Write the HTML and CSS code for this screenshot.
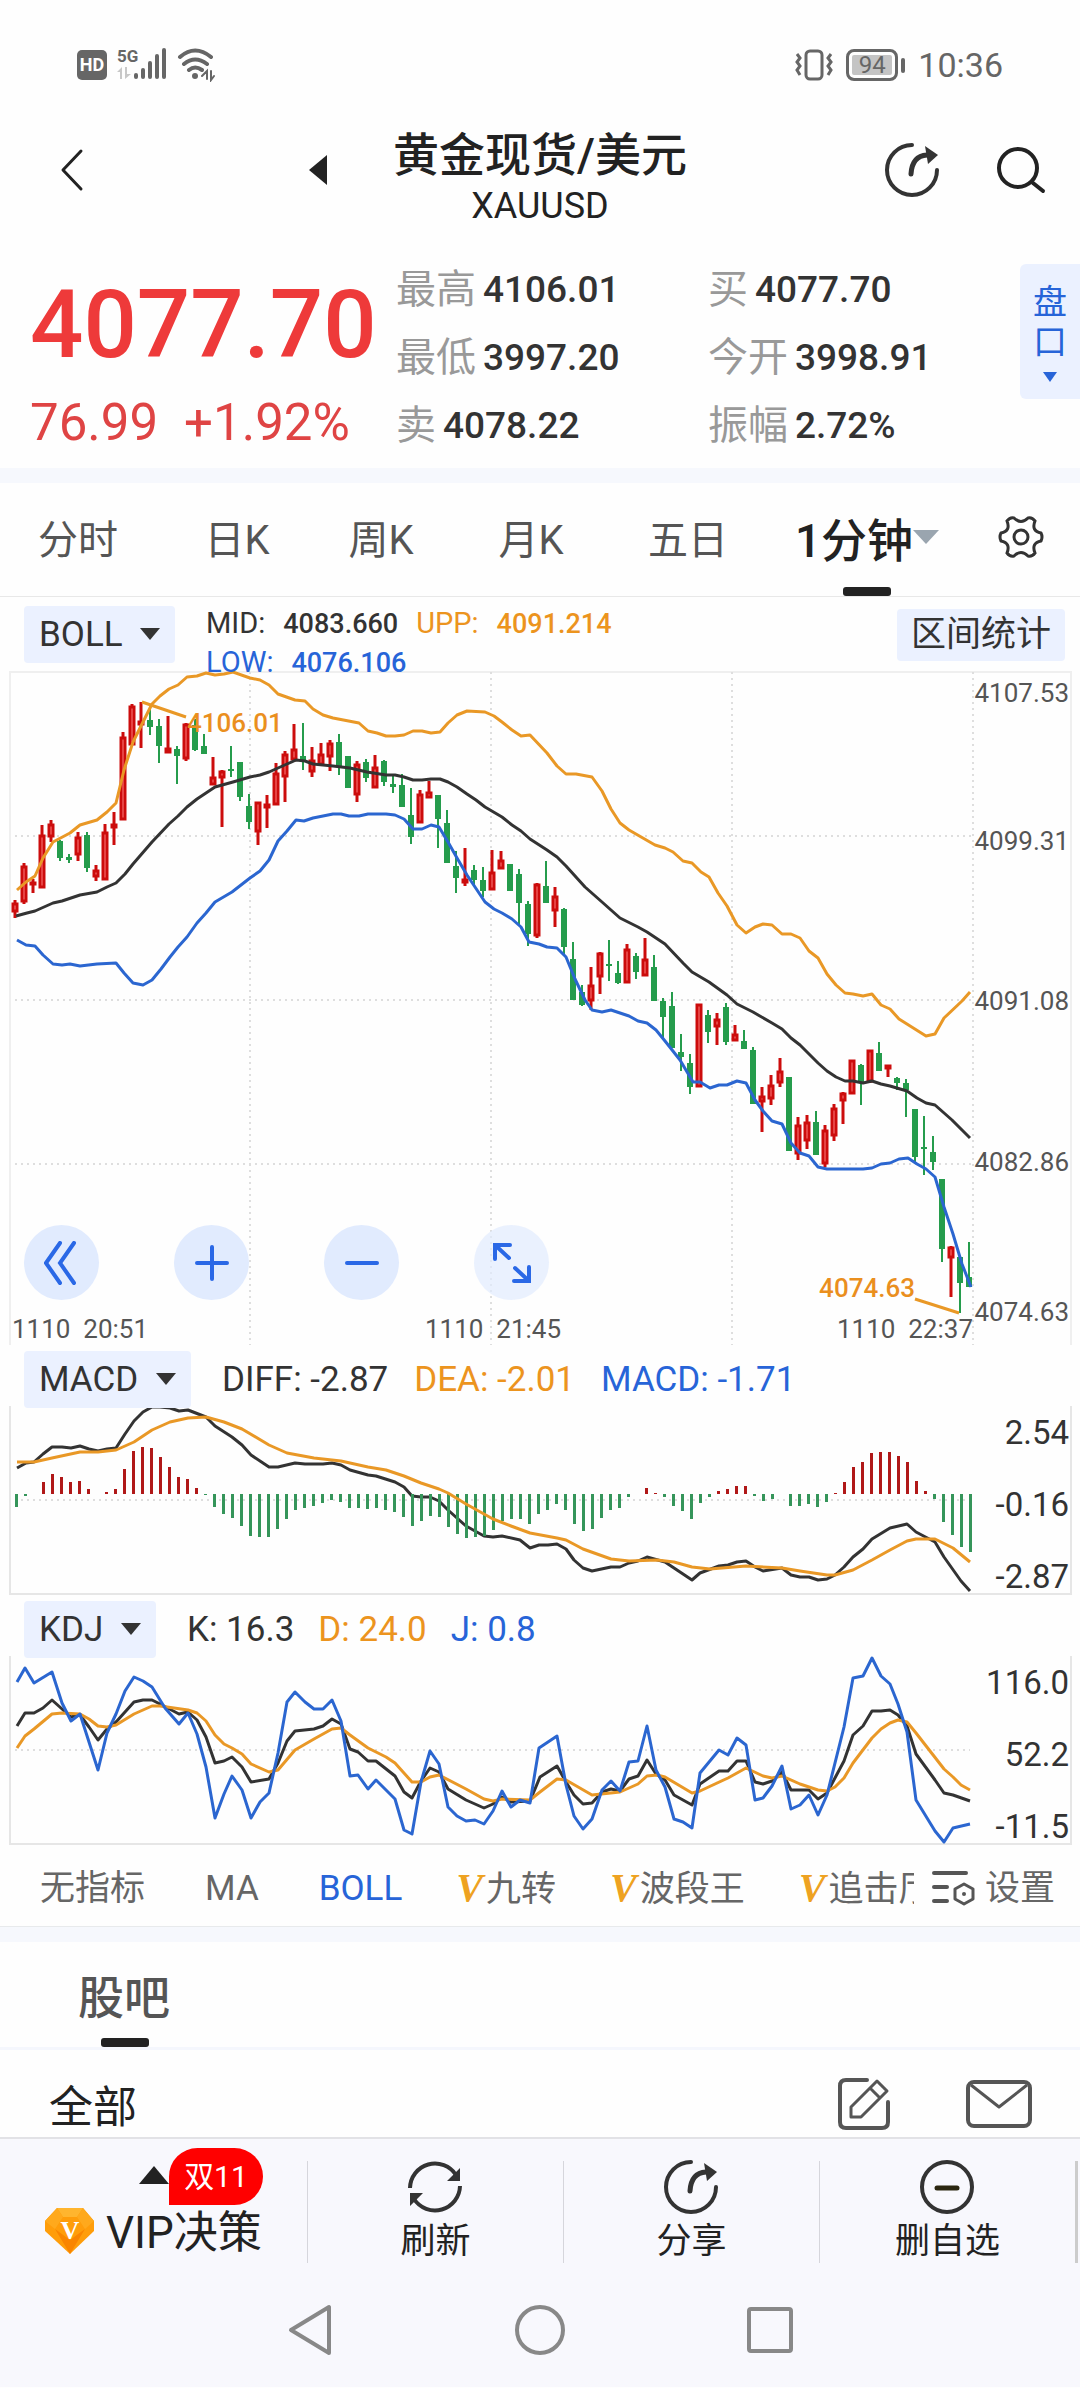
FILE: index.html
```html
<!DOCTYPE html>
<html lang="zh-CN">
<head>
  <meta charset="UTF-8" />
  <meta name="viewport" content="width=device-width, initial-scale=1.0"/>
  <title>黄金现货/美元 XAUUSD</title>
  <link rel="stylesheet" href="styles.css">
</head>

<body>
  <div class="status-bar">
    <div class="status-left">
      <span class="hd">HD</span>
      <svg width="50" height="36" viewBox="0 0 50 36" fill="#666">
        <text x="0" y="15" font-size="17" font-weight="700" class="net">5G</text>
        <g fill="#c8c8c8"><path d="M0 25l5-5v12H3v-7zM8 20h2v7h4l-6 5z"/></g>
        <rect x="17" y="26" width="4" height="6" rx="2"/>
        <rect x="24" y="21" width="4" height="11" rx="2"/>
        <rect x="31" y="14" width="4" height="18" rx="2"/>
        <rect x="38" y="7" width="4" height="25" rx="2"/>
        <rect x="45" y="1" width="4" height="31" rx="2"/>
      </svg>
      <svg width="40" height="34" viewBox="0 0 40 34" fill="none" stroke="#666" stroke-width="4" stroke-linecap="round">
        <path d="M3 9q15-13 31 0M7 16q11-9 23 0M12 22q6-5 13 0"/>
        <circle cx="18" cy="28" r="3" fill="#666" stroke="none"/>
        <path d="M25 28l5-5v8M34 23v9l3-4" stroke-width="2"/>
      </svg>
    </div>
    <div class="status-right">
      <svg width="40" height="32" viewBox="0 0 40 32" fill="none" stroke="#666" stroke-width="3">
        <rect x="12" y="2" width="16" height="28" rx="4"/>
        <path d="M3 5l3 4-3 4 3 4-3 4 3 5M37 5l-3 4 3 4-3 4 3 4-3 5"/>
      </svg>
      <span class="battery">94</span>
      <span class="clock">10:36</span>
    </div>
  </div>

  <header class="top">
    <div class="top-side">
      <button class="icon-btn" aria-label="返回">
        <svg width="24" height="44" viewBox="0 0 24 44" fill="none" stroke="#222" stroke-width="3" stroke-linecap="round" stroke-linejoin="round"><path d="M21 3L3 22l18 19"/></svg>
      </button>
      <button class="icon-btn prev" aria-label="上一个">
        <svg width="18" height="30" viewBox="0 0 18 30" fill="#222"><path d="M18 0v30L0 15z"/></svg>
      </button>
    </div>
    <div class="title">
      <h1>黄金现货/美元</h1>
      <p>XAUUSD</p>
    </div>
    <div class="top-side right">
      <button class="icon-btn" aria-label="分享">
        <svg width="56" height="56" viewBox="0 0 56 56"><use href="#i-share"/></svg>
      </button>
      <button class="icon-btn" aria-label="搜索">
        <svg width="50" height="48" viewBox="0 0 50 48" fill="none" stroke="#222" stroke-width="4" stroke-linecap="round"><circle cx="22" cy="22" r="19"/><path d="M37 37l10 8"/></svg>
      </button>
    </div>
  </header>

  <section class="quote">
    <div class="price">
      <strong>4077.70</strong>
      <p><span>76.99</span><span>+1.92%</span></p>
    </div>
    <dl class="stats">
      <div><dt>最高</dt><dd>4106.01</dd></div>
      <div><dt>买</dt><dd>4077.70</dd></div>
      <div><dt>最低</dt><dd>3997.20</dd></div>
      <div><dt>今开</dt><dd>3998.91</dd></div>
      <div><dt>卖</dt><dd>4078.22</dd></div>
      <div><dt>振幅</dt><dd>2.72%</dd></div>
    </dl>
    <button class="depth">盘口<i class="caret"></i></button>
  </section>

  <nav class="periods">
    <button>分时</button>
    <button>日K</button>
    <button>周K</button>
    <button>月K</button>
    <button>五日</button>
    <button class="active">1分钟<i class="caret"></i></button>
    <button aria-label="图表设置">
      <svg width="46" height="46" viewBox="-23 -23 46 46" fill="none" stroke="#333" stroke-width="3">
        <path d="M20-4Q22 0 20 4Q10 6 14 16Q11 20 7 19Q0 12-7 19Q-11 20-14 16Q-10 6-20 4Q-22 0-20-4Q-10-6-14-16Q-11-20-7-19Q0-12 7-19Q11-20 14-16Q10-6 20-4z"/>
        <circle r="7"/>
      </svg>
    </button>
  </nav>

  <main>
    <section class="chart">
      <div class="chart-head main-head">
        <label class="chip"><select aria-label="主图指标"><option>BOLL</option></select></label>
        <div class="boll">
          <span class="mid">MID: <b>4083.660</b></span>
          <span class="orange">UPP: <b>4091.214</b></span>
          <span class="blue">LOW: <b>4076.106</b></span>
        </div>
        <button class="range">区间统计</button>
      </div>
      <div class="plot">
        <svg id="kline" viewBox="0 0 1080 675"></svg>
        <div class="tools">
          <button aria-label="后退"><svg width="36" height="44" viewBox="0 0 36 44"><path d="M16 2L2 22l14 20M30 2L16 22l14 20"/></svg></button>
          <button aria-label="放大"><svg width="34" height="44" viewBox="0 0 34 44"><path d="M17 6v32M2 22h30"/></svg></button>
          <button aria-label="缩小"><svg width="34" height="44" viewBox="0 0 34 44"><path d="M2 22h30"/></svg></button>
          <button class="light" aria-label="全屏"><svg width="40" height="44" viewBox="0 0 40 44"><path d="M3 18V4h15M3 4l14 13M37 26v14H22M37 40L23 27"/></svg></button>
        </div>
      </div>
    </section>

    <section class="chart">
      <div class="chart-head">
        <label class="chip"><select aria-label="副图指标一"><option>MACD</option></select></label>
        <p class="values macd"><span>DIFF: -2.87</span><span class="orange">DEA: -2.01</span><span class="blue">MACD: -1.71</span></p>
      </div>
      <svg id="macd" class="sub" viewBox="0 0 1080 190"></svg>
    </section>

    <section class="chart">
      <div class="chart-head">
        <label class="chip"><select aria-label="副图指标二"><option>KDJ</option></select></label>
        <p class="values"><span>K: 16.3</span><span class="orange">D: 24.0</span><span class="blue">J: 0.8</span></p>
      </div>
      <svg id="kdj" class="sub" viewBox="0 0 1080 190"></svg>
    </section>

    <div class="indicators">
      <div class="indicator-list">
        <button>无指标</button>
        <button>MA</button>
        <button class="blue">BOLL</button>
        <button class="vip"><i>V</i>九转</button>
        <button class="vip"><i>V</i>波段王</button>
        <button class="vip"><i>V</i>追击厅</button>
      </div>
      <button class="setting">
        <svg width="44" height="38" viewBox="0 0 44 38" fill="none" stroke="#555" stroke-width="4" stroke-linecap="round">
          <path d="M2 3h32M2 17h13M2 31h13"/>
          <path d="M32 14l9 5v10l-9 5-9-5V19z" stroke-width="3" stroke-linejoin="round"/>
          <circle cx="32" cy="24" r="2" fill="#555" stroke="none"/>
        </svg>
        设置
      </button>
    </div>

    <section class="forum">
      <h2>股吧</h2>
      <div class="filter">
        <button class="all">全部</button>
        <div class="filter-icons">
          <button class="icon-btn" aria-label="发帖">
            <svg width="54" height="54" viewBox="0 0 54 54" fill="none" stroke="#555" stroke-width="4" stroke-linecap="round" stroke-linejoin="round">
              <path d="M30 3H9q-6 0-6 6v36q0 6 6 6h36q6 0 6-6V25"/>
              <path d="M14 40V30L40 4l10 10-26 26zM33 11l10 10" stroke-width="3"/>
            </svg>
          </button>
          <button class="icon-btn" aria-label="消息">
            <svg width="66" height="48" viewBox="0 0 66 48" fill="none" stroke="#555" stroke-width="4" stroke-linejoin="round">
              <rect x="2" y="2" width="62" height="44" rx="6"/>
              <path d="M5 5l28 22L61 5" stroke-width="3"/>
            </svg>
          </button>
        </div>
      </div>
    </section>
  </main>

  <footer>
    <div class="actions">
      <button class="vip-entry">
        <svg width="50" height="48" viewBox="0 0 50 48">
          <path d="M12 1h26l11 13v10L25 47 0 24V14z" fill="#ff9d0a"/>
          <path d="M12 1h26l-6 9H18z" fill="#ffb52e"/>
          <path d="M12 1l6 9-8 12L0 14zM38 1l-6 9 8 12 9-8z" fill="#ffa91c"/>
          <path d="M25 33L10 22 25 47l15-25z" fill="#f98500"/>
          <text x="25" y="32" text-anchor="middle" class="gem">V</text>
        </svg>
        <span>VIP决策</span>
        <i class="up"></i>
        <em>双11</em>
      </button>
      <button class="action">
        <svg width="56" height="56" viewBox="0 0 56 56" fill="none" stroke="#333" stroke-width="4">
          <path d="M3 29A25 25 0 0 1 49 16M53 27A25 25 0 0 1 7 40"/>
          <path d="M53 9v13H40zM3 47V34h13z" fill="#333" stroke="none"/>
        </svg>
        刷新
      </button>
      <button class="action">
        <svg width="56" height="56" viewBox="0 0 56 56"><use href="#i-share"/></svg>
        分享
      </button>
      <button class="action">
        <svg width="56" height="56" viewBox="0 0 56 56" fill="none" stroke="#333" stroke-width="4">
          <circle cx="28" cy="28" r="25"/><path d="M18 29h20" stroke="#2b2710" stroke-width="5" stroke-linecap="round"/>
        </svg>
        删自选
      </button>
    </div>
    <div class="sysnav">
      <button class="icon-btn" aria-label="返回键"><svg width="46" height="54" viewBox="0 0 46 54"><path d="M42 4v46L4 27z"/></svg></button>
      <button class="icon-btn" aria-label="主页键"><svg width="52" height="52" viewBox="0 0 52 52"><circle cx="26" cy="26" r="23"/></svg></button>
      <button class="icon-btn" aria-label="任务键"><svg width="46" height="46" viewBox="0 0 46 46"><rect x="2" y="2" width="42" height="42" rx="2"/></svg></button>
    </div>
  </footer>

  <svg class="defs" aria-hidden="true">
    <symbol id="i-share" viewBox="0 0 56 56">
      <path d="M28 3A25 25 0 1 0 53 28" fill="none" stroke="#333" stroke-width="4" stroke-linecap="round"/>
      <path d="M27 32Q28 14 43 13" fill="none" stroke="#333" stroke-width="5" stroke-linecap="round"/>
      <path d="M41 4l13 9-10 9z" fill="#333"/>
    </symbol>
  </svg>

  <script src="script.js"></script>
</body>
</html>
```
FILE: styles.css
```css
* {
  margin: 0;
  padding: 0;
  box-sizing: border-box;
}

body {
  background: #fefefe;
  color: #333;
  font-family: Roboto, "Noto Sans CJK SC", sans-serif;
  font-size: 35px;
}

button,
select {
  font: inherit;
  color: inherit;
  background: none;
  border: none;
  white-space: nowrap;
}

svg {
  display: block;
  flex-shrink: 0;
}

i,
em {
  font-style: normal;
}

.defs {
  position: absolute;
  width: 0;
  height: 0;
}

.orange {
  color: #ec941e;
}

.blue {
  color: #2764d8;
}

.caret {
  width: 0;
  height: 0;
  border: 7px solid transparent;
  border-top: 10px solid currentColor;
  border-bottom: 0;
}

.icon-btn {
  display: flex;
  align-items: center;
  justify-content: center;
}

/* status bar */
.status-bar {
  height: 130px;
  padding: 0 77px;
  display: flex;
  justify-content: space-between;
  align-items: center;
  color: #666;
}

.status-left,
.status-right {
  display: flex;
  align-items: center;
  gap: 10px;
}

.hd {
  width: 30px;
  height: 30px;
  border-radius: 5px;
  background: #666;
  color: #fff;
  font-size: 18px;
  font-weight: 700;
  line-height: 30px;
  text-align: center;
}

.battery {
  position: relative;
  width: 52px;
  height: 32px;
  margin: 0 10px 0 2px;
  border: 3px solid #666;
  border-radius: 8px;
  background: #c4c4c4;
  box-shadow: inset 0 0 0 3px #fefefe;
  font-size: 24px;
  line-height: 26px;
  text-align: center;
}

.battery::after {
  content: "";
  position: absolute;
  right: -10px;
  top: 6px;
  width: 4px;
  height: 15px;
  border-radius: 2px;
  background: #666;
}

.clock {
  font-size: 34px;
}

/* title */
.top {
  display: grid;
  grid-template-columns: 1fr auto 1fr;
  align-items: start;
  color: #222;
}

.top-side {
  height: 80px;
  padding-left: 60px;
  display: flex;
  align-items: center;
}

.top-side .prev {
  margin-left: auto;
  margin-right: 66px;
}

.top-side.right {
  justify-content: flex-end;
  gap: 56px;
  padding: 0 34px 0 0;
}

.title {
  text-align: center;
  line-height: 51px;
}

.title h1 {
  font-size: 46px;
  font-weight: 500;
}

.title p {
  font-size: 36px;
}

/* quote */
.quote {
  position: relative;
  display: flex;
  padding: 24px 84px 8px 30px;
  border-bottom: 15px solid #f6f8fd;
}

.price {
  width: 366px;
  color: #ee3a3a;
}

.price strong {
  display: block;
  font-size: 94px;
  font-weight: 500;
  line-height: 138px;
}

.price p {
  display: flex;
  gap: 26px;
  font-size: 51px;
  line-height: 58px;
  color: #df4444;
}

.stats {
  flex: 1;
  display: grid;
  grid-template-columns: 312px 1fr;
}

.stats div {
  display: flex;
  gap: 7px;
  line-height: 68px;
}

.stats dt {
  font-size: 40px;
  color: #999;
}

.stats dd {
  font-size: 37px;
  font-weight: 500;
}

.depth {
  position: absolute;
  right: 0;
  top: 32px;
  width: 60px;
  height: 135px;
  display: flex;
  flex-direction: column;
  align-items: center;
  justify-content: center;
  border-radius: 6px 0 0 6px;
  background: #ebf1ff;
  color: #2764d8;
  font-size: 34px;
  line-height: 40px;
  white-space: normal;
  padding: 0 12px;
}

.depth .caret {
  margin-top: 10px;
}

/* periods */
.periods {
  display: grid;
  grid-template-columns: 156fr 162fr 126fr 174fr 140fr 218fr 90fr;
  height: 114px;
  padding-right: 14px;
  border-bottom: 1px solid #e8e8e8;
  font-size: 40px;
  color: #555;
}

.periods button {
  position: relative;
  display: flex;
  align-items: center;
  justify-content: center;
  padding-bottom: 5px;
}

.periods .active {
  color: #222;
  font-size: 46px;
  font-weight: 500;
}

.periods .active::after {
  content: "";
  position: absolute;
  left: calc(50% - 24px);
  bottom: 0;
  width: 48px;
  height: 9px;
  border-radius: 3px;
  background: #222;
}

.periods .caret {
  border-width: 13px;
  border-top-width: 14px;
  border-bottom-width: 0;
  color: #9aa5af;
}

/* charts */
.chart {
  padding-bottom: 5px;
}

.chart-head {
  position: relative;
  z-index: 1;
  display: flex;
  align-items: flex-start;
  height: 57px;
  padding: 0 15px 0 24px;
}

.main-head {
  height: 74px;
  padding-top: 9px;
}

.chip {
  position: relative;
  height: 57px;
  border-radius: 4px;
  background: #ebf1ff;
}

.chip select {
  height: 57px;
  padding: 0 52px 0 15px;
  font-size: 35px;
  appearance: none;
}

.chip::after {
  content: "";
  position: absolute;
  right: 15px;
  top: 22px;
  border: 10px solid transparent;
  border-top: 12px solid #333;
  border-bottom: 0;
  pointer-events: none;
}

.boll {
  display: flex;
  flex-wrap: wrap;
  max-width: 480px;
  column-gap: 18px;
  margin: -2px auto 0 31px;
  font-size: 29px;
  line-height: 38px;
}

.boll span {
  display: flex;
  gap: 18px;
  align-items: baseline;
}

.boll b {
  font-size: 27px;
  font-weight: 500;
}

.range {
  height: 52px;
  margin-top: 3px;
  padding: 0 14px;
  border-radius: 4px;
  background: #ebf1ff;
  line-height: 52px;
}

.values {
  display: flex;
  gap: 24px;
  margin-left: 31px;
  line-height: 57px;
}

.macd {
  gap: 26px;
}

.plot {
  position: relative;
}

.plot svg {
  font-size: 26px;
}

#kline,
.sub {
  width: 100%;
}

.sub {
  margin-top: -2px;
  font-size: 33px;
}

.tools {
  position: absolute;
  left: 24px;
  bottom: 46px;
  display: flex;
  gap: 75px;
}

.tools button {
  width: 75px;
  height: 75px;
  display: flex;
  align-items: center;
  justify-content: center;
  border-radius: 50%;
  background: #e1ebfe;
}

.tools .light {
  background: rgba(225, 235, 254, 0.7);
}

.tools path {
  fill: none;
  stroke: #2a68e6;
  stroke-width: 4;
  stroke-linecap: round;
}

.frame {
  fill: none;
  stroke: #e6e6e6;
  stroke-width: 2;
}

#kline .frame {
  stroke: #efefef;
}

.grid {
  stroke: #dedede;
  stroke-width: 2;
  stroke-dasharray: 2 4;
}

.line {
  fill: none;
  stroke-width: 3;
  stroke-linejoin: round;
}

.line-black {
  stroke: #333;
}

.line-orange {
  stroke: #e99826;
}

.line-blue {
  stroke: #2b66d0;
}

.up-candle {
  fill: #ff7d7d;
  stroke: #cc0c0c;
  stroke-width: 3;
}

.down-candle {
  fill: #259c4c;
}

.bar-up {
  fill: #b01818;
}

.bar-down {
  fill: #35955a;
}

.axis {
  fill: #555;
}

.axis-dark {
  fill: #333;
}

.mark {
  fill: #ea8f1e;
  font-weight: 500;
}

/* indicator tabs */
.indicators {
  display: flex;
  align-items: center;
  height: 76px;
  border-bottom: 1px solid #e8eaec;
  line-height: 50px;
  color: #666;
}

.indicator-list {
  display: flex;
  flex: 1;
  gap: 60px;
  min-width: 0;
  padding-left: 40px;
  overflow: hidden;
}

.indicator-list .vip {
  display: flex;
  align-items: baseline;
  margin-left: -6px;
}

.vip i {
  margin-right: 3px;
  font: italic 700 40px/50px "Liberation Serif", serif;
  color: #eea221;
}

.setting {
  display: flex;
  align-items: center;
  gap: 9px;
  padding: 0 25px 0 18px;
}

/* forum */
.forum {
  border-top: 15px solid #f6f8fd;
}

.forum h2 {
  position: relative;
  height: 108px;
  padding-left: 78px;
  border-bottom: 3px solid #f5f7fd;
  font-size: 46px;
  font-weight: 500;
  line-height: 112px;
  color: #555;
}

.forum h2::after {
  content: "";
  position: absolute;
  left: 101px;
  bottom: 0;
  width: 48px;
  height: 9px;
  border-radius: 3px;
  background: #222;
}

.filter {
  display: flex;
  align-items: center;
  justify-content: space-between;
  height: 87px;
  padding: 20px 48px 0 49px;
  font-size: 44px;
  line-height: 56px;
  color: #222;
}

.filter .all {
  padding-top: 8px;
}

.filter-icons {
  display: flex;
  align-items: center;
  gap: 75px;
}

/* bottom bar */
footer {
  border-top: 2px solid #e2e2e6;
  background: #f8f8fd;
  color: #222;
}

.actions {
  display: flex;
  padding: 22px 2px 0 0;
}

.actions button {
  height: 102px;
  border-right: 1px solid #d6d6dc;
}

.actions .vip-entry {
  position: relative;
  flex: 308;
  display: flex;
  align-items: flex-end;
  justify-content: center;
  gap: 11px;
  padding: 0 0 2px;
  font-size: 44px;
  line-height: 56px;
}

.vip-entry svg {
  margin-bottom: 6px;
}

.gem {
  font: 700 26px "Liberation Serif", serif;
  fill: #fff;
}

.up {
  position: absolute;
  left: 139px;
  top: 5px;
  border: 15px solid transparent;
  border-bottom: 18px solid #222;
  border-top: 0;
}

.vip-entry em {
  position: absolute;
  left: 169px;
  top: -13px;
  width: 94px;
  height: 57px;
  border-radius: 29px 29px 29px 0;
  background: #f00;
  color: #fff;
  font-size: 30px;
  line-height: 57px;
}

.actions .action {
  flex: 256;
  display: flex;
  flex-direction: column;
  align-items: center;
  gap: 6px;
  line-height: 42px;
}

.action svg {
  margin-top: -2px;
}

.actions .action:last-child {
  border-right: 3px solid #ccc;
}

.sysnav {
  display: flex;
  justify-content: center;
  align-items: center;
  gap: 181px;
  height: 124px;
  padding-top: 10px;
}

.sysnav svg {
  fill: none;
  stroke: #888;
  stroke-width: 4;
  stroke-linejoin: round;
}
```
FILE: script.js
```js
// candles: [high, body top, body bottom, low], rising when the first letter is "u"
const candles = `u229,232,241,247 u192,195,231,233 u208,211,214,222 u154,164,217,217 u149,153,166,171
d169,170,187,190 d183,186,189,192 u161,166,184,190 d161,164,197,201 u194,199,206,210
u153,161,209,209 u141,153,157,174 u61,66,149,149 u33,35,74,74 u31,50,54,77
d38,49,56,64 d48,55,75,92 u45,77,82,82 d75,78,85,113 u52,53,88,90
d48,54,79,80 d63,75,83,83 u86,106,114,114 u99,100,107,156 d75,98,100,106
d91,91,126,130 d123,135,151,158 u131,131,161,174 u124,133,137,157 u92,102,134,134
u80,83,106,131 u53,78,89,91 d52,85,91,99 u76,89,101,106 u72,83,94,95
u69,72,86,100 d63,71,96,104 d85,85,117,117 u90,93,124,131 d88,91,107,111
u84,96,117,117 d89,90,111,115 d104,113,116,122 d103,114,136,136 d117,144,166,173
u119,123,152,152 u110,121,127,127 d124,124,148,177 d139,152,192,192 d180,195,207,222
u177,208,212,215 d194,199,209,214 d196,209,220,226 u179,201,219,219 u180,189,198,198
d193,193,220,220 d198,203,232,254 d230,233,263,275 u212,213,265,267 d190,215,232,232
u216,225,240,256 d237,238,276,284 d271,288,329,329 d314,321,334,335 u296,314,330,339
u281,282,306,323 d269,293,295,310 d290,302,312,313 u273,278,312,312 d282,285,301,308
u267,288,305,305 d284,296,330,330 d327,330,346,367 d321,335,377,377 d363,381,386,400
d383,392,416,423 u333,333,416,416 d339,344,361,372 u342,348,356,374 d332,336,371,374
u354,363,370,370 d359,370,378,378 d376,379,433,433 u416,425,431,461 u404,414,428,434
u387,400,412,416 d406,406,480,480 u446,454,483,489 u444,451,470,478 d440,451,484,484
u454,459,493,496 u433,437,465,470 u421,422,430,453 u389,389,423,423 d393,394,411,434
u379,379,411,412 d371,382,400,400 u394,394,398,406 d406,407,412,419 d408,412,419,446
d438,438,486,493 d445,476,478,504 d465,481,491,499 d508,508,578,591 u575,576,587,626
d586,586,612,642 d571,606,616,616`.split(/\s+/);

const upper = "17,219 26,211 35,205 43,187 53,171 70,162 80,154 97,149 107,141 116,132 124,99 133,71 143,51 152,33 160,25 169,18 178,14 187,6 197,5 206,2 215,4 224,3 233,1 250,7 260,9 269,14 278,23 295,29 305,30 313,38 323,44 333,47 359,52 368,60 377,62 386,65 395,65 404,64 413,60 422,60 431,62 440,61 448,52 457,44 467,40 485,41 494,45 502,51 512,59 521,65 530,64 547,82 557,95 566,103 576,103 592,106 602,120 611,138 620,152 629,159 655,174 665,177 673,181 683,190 692,192 701,201 709,206 718,222 727,235 737,254 746,262 755,256 763,253 772,254 782,263 791,263 800,267 809,280 818,287 827,303 836,314 845,322 853,323 863,325 872,323 881,334 890,338 899,348 926,365 935,363 944,347 962,330 970,321";
const mid = "16,245 27,242 35,240 53,232 62,230 80,224 97,221 107,216 116,212 125,203 133,193 152,171 169,153 178,145 187,136 197,128 206,122 215,116 233,111 250,106 260,104 269,101 287,93 296,89 305,90 313,93 333,95 350,97 367,101 386,104 395,104 404,106 413,109 422,109 431,108 440,108 448,111 457,116 467,123 476,129 485,136 502,146 512,154 521,160 530,168 547,179 557,186 566,195 585,216 602,231 620,247 638,256 647,261 665,273 683,292 692,301 709,311 727,324 737,333 753,341 772,352 782,358 791,367 800,374 818,392 827,400 836,406 845,410 853,410 863,412 872,410 881,413 890,415 907,420 917,427 926,432 935,434 952,449 962,459 970,467";
const lower = "17,269 26,274 35,275 43,284 53,293 62,294 70,293 80,295 97,293 116,292 124,302 133,312 143,314 152,309 161,298 170,286 178,276 187,266 197,252 206,242 215,231 232,221 250,207 260,200 269,189 278,170 287,160 296,149 304,150 313,147 333,143 341,143 349,145 359,145 368,143 386,143 395,144 404,148 413,158 422,158 431,154 439,156 448,171 457,187 467,204 485,231 494,238 502,242 512,248 521,256 529,271 539,273 547,276 557,277 566,286 575,308 585,329 592,339 602,341 611,339 629,345 638,350 647,352 656,359 665,370 680,389 693,411 700,411 710,417 719,414 727,414 737,410 746,412 755,429 763,440 772,450 782,453 791,472 800,482 809,485 818,496 827,498 863,498 872,497 881,493 890,492 899,488 908,487 917,493 926,498 935,506 944,536 953,563 962,593 971,616";

// MACD histogram, pixels from the zero line, negative is above it
const hist = [13,2,0,-12,-20,-17,-12,-13,-5,0,-2,-5,-25,-43,-47,-46,-37,-27,-17,-15,-6,1,13,20,24,32,42,43,43,35,25,16,14,12,9,6,8,14,14,15,14,16,18,23,32,27,22,23,33,40,44,43,42,36,27,25,25,30,20,16,10,16,30,37,35,24,16,14,3,0,-6,-1,3,12,17,25,9,3,-3,-5,-8,-8,2,7,5,0,12,12,10,13,8,-1,-12,-27,-32,-41,-42,-42,-38,-32,-13,-3,5,28,41,53,58];
const diff = "17,62 26,57 34,56 43,48 52,41 62,41 71,42 80,40 89,43 98,45 107,43 116,42 125,28 134,15 143,6 152,1 160,1 170,2 179,5 188,4 206,11 215,20 232,31 242,39 251,49 269,61 278,61 295,57 305,58 323,58 332,57 341,59 350,64 368,69 376,70 395,76 404,81 412,90 421,91 430,91 439,95 448,104 466,120 484,130 493,131 502,130 520,134 530,142 539,139 548,139 557,138 566,143 574,154 583,162 592,165 611,161 620,161 629,157 638,155 647,151 665,156 674,162 692,174 700,167 719,160 728,159 737,156 746,155 755,161 763,165 782,162 791,169 800,171 809,171 818,174 827,173 835,169 844,161 853,151 863,143 872,133 890,122 907,118 916,126 935,136 944,151 961,175 970,185";
const dea = "17,56 34,56 52,52 80,46 98,46 116,44 134,36 152,24 170,16 188,12 206,11 224,16 242,23 269,39 287,47 314,52 341,55 368,61 386,64 404,70 421,77 439,83 448,87 466,98 493,113 511,120 530,127 557,132 566,134 583,143 611,153 629,155 657,154 674,156 692,161 710,163 746,160 782,162 800,165 827,169 835,169 853,164 872,154 890,144 907,135 916,133 935,133 953,142 970,156";

const kLine = "17,70 25,57 34,57 43,52 52,44 71,61 80,59 89,71 98,84 107,73 116,66 125,56 134,46 143,44 152,44 160,48 179,58 188,56 197,64 206,81 215,107 224,105 232,101 242,111 251,126 269,123 278,107 287,85 295,75 314,73 323,70 332,63 341,68 350,93 358,96 368,105 376,105 395,120 404,136 412,142 421,125 430,112 439,116 448,133 466,144 484,152 493,148 502,141 511,146 530,145 540,121 557,110 566,126 574,139 583,148 592,147 602,136 611,133 620,135 629,123 638,120 647,104 656,118 665,124 674,139 692,149 700,128 719,115 728,115 737,105 746,105 755,126 763,128 772,125 782,116 791,134 809,134 818,143 827,137 844,105 853,79 863,70 872,55 881,55 890,54 898,59 907,70 916,98 935,124 944,137 953,139 970,145";
const dLine = "17,92 25,80 34,73 52,58 62,57 80,58 89,63 98,70 107,71 116,69 134,58 152,50 160,50 188,54 197,57 206,65 215,79 224,88 232,92 242,98 251,108 269,116 278,114 295,94 314,83 332,73 341,72 350,79 368,92 386,101 395,107 412,126 421,126 430,121 439,119 466,133 484,143 493,145 502,143 530,144 540,136 557,123 566,124 592,139 620,136 638,128 647,120 657,119 665,121 692,137 700,135 728,122 746,112 763,120 772,122 782,120 800,128 818,134 827,135 835,131 844,122 853,107 872,82 881,73 890,67 898,64 907,66 916,77 944,113 953,121 961,129 970,134";
const jLine = "17,26 25,12 34,27 52,16 62,47 71,65 80,58 98,114 107,77 116,58 125,35 134,21 143,25 152,31 165,52 179,68 188,57 197,78 206,111 215,162 224,138 232,120 242,134 251,162 260,146 269,137 278,97 287,46 295,36 305,46 314,53 323,53 332,44 341,65 350,120 358,119 368,133 376,124 395,143 404,174 412,178 421,126 430,95 439,108 448,151 457,160 466,165 475,164 484,168 493,155 502,135 511,151 520,144 530,147 539,92 557,80 566,129 574,160 583,173 592,163 602,134 611,125 620,135 629,106 638,105 647,70 656,114 665,131 674,163 683,166 692,172 700,117 719,94 728,99 737,82 746,89 755,144 763,142 772,130 782,110 791,153 800,149 809,139 818,159 827,139 844,71 853,22 863,20 872,2 881,20 890,28 898,48 907,76 916,144 935,175 944,186 953,172 970,168";

const STEP = 9;

const line = (points, color) => `<polyline class="line line-${color}" points="${points}"/>`;
const path = (d, cls) => `<path class="${cls}" d="${d}"/>`;
const text = (x, y, str, cls, anchor = "start") =>
  `<text x="${x}" y="${y}" class="${cls}" text-anchor="${anchor}" xml:space="preserve">${str}</text>`;

function drawCandle(row, i) {
  const x = 15 + i * STEP;
  const [high, top, bottom, low] = row.slice(1).split(",").map(Number);
  const h = Math.max(bottom - top, 2);
  if (row[0] === "u") {
    return `<path class="up-candle" d="M${x} ${high}V${top}M${x} ${bottom}V${low}"/>
      <rect class="up-candle" x="${x - 2}" y="${top + 1}" width="4" height="${Math.max(h - 2, 1)}"/>`;
  }
  return `<rect class="down-candle" x="${x - 1}" y="${high}" width="2" height="${low - high}"/>
    <rect class="down-candle" x="${x - 3}" y="${top}" width="6" height="${h}"/>`;
}

document.getElementById("kline").innerHTML =
  path("M10 674V1H1071V674", "frame") +
  path("M15 165H973M15 329H973M15 493H973M250 1V674M491 1V674M732 1V674M973 1V674", "grid") +
  candles.map(drawCandle).join("") +
  line(upper, "orange") + line(mid, "black") + line(lower, "blue") +
  line("142,31 186,46", "orange") + line("915,628 959,642", "orange") +
  text(187, 61, "4106.01", "mark") +
  text(915, 626, "4074.63", "mark", "end") +
  ["4107.53", "4099.31", "4091.08", "4082.86", "4074.63"]
    .map((t, i) => text(1069, [31, 179, 339, 500, 650][i], t, "axis", "end")).join("") +
  text(12, 667, "1110  20:51", "axis") +
  text(493, 667, "1110  21:45", "axis", "middle") +
  text(973, 667, "1110  22:37", "axis", "end");

function drawSub(id, labels, zeroY, content) {
  document.getElementById(id).innerHTML =
    path("M10 0V188H1071V0", "frame") +
    path(`M15 ${zeroY}H970`, "grid") +
    content +
    labels.map((t, i) => text(1069, 38 + i * 72, t, "axis-dark", "end")).join("");
}

const bars = hist.map((v, i) =>
  `<rect class="${v < 0 ? "bar-up" : "bar-down"}" x="${15 + i * STEP}" y="${v < 0 ? 88 + v : 88}" width="3" height="${Math.abs(v)}"/>`
).join("");

drawSub("macd", ["2.54", "-0.16", "-2.87"], 94, line(diff, "black") + bars + line(dea, "orange"));
drawSub("kdj", ["116.0", "52.2", "-11.5"], 94, line(kLine, "black") + line(dLine, "orange") + line(jLine, "blue"));
```
